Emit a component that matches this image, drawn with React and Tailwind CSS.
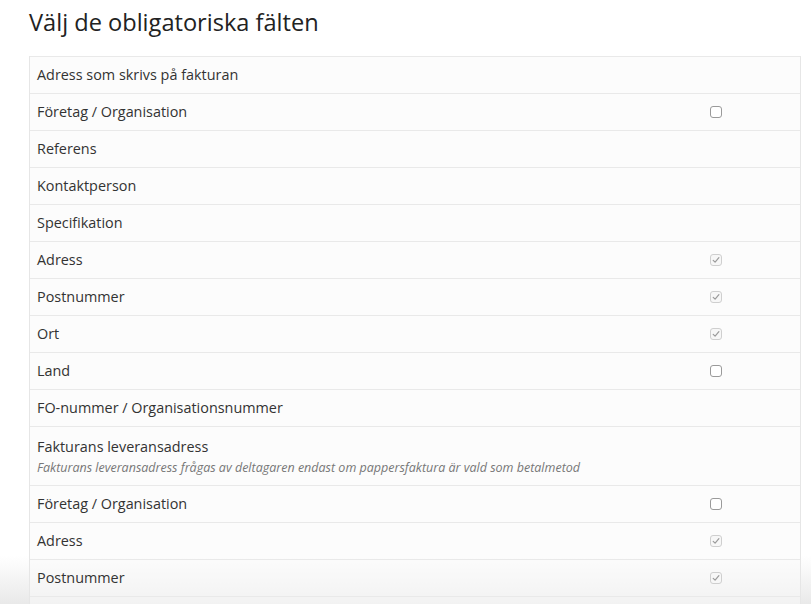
import React from "react";

const rows = [
  { label: "Adress som skrivs på fakturan" },
  { label: "Företag / Organisation", box: "off" },
  { label: "Referens" },
  { label: "Kontaktperson" },
  { label: "Specifikation" },
  { label: "Adress", box: "on" },
  { label: "Postnummer", box: "on" },
  { label: "Ort", box: "on" },
  { label: "Land", box: "off" },
  { label: "FO-nummer / Organisationsnummer" },
  {
    label: "Fakturans leveransadress",
    desc: "Fakturans leveransadress frågas av deltagaren endast om pappersfaktura är vald som betalmetod",
  },
  { label: "Företag / Organisation", box: "off" },
  { label: "Adress", box: "on" },
  { label: "Postnummer", box: "on" },
  { label: "" },
];

function Box({ state }) {
  if (state === "off") {
    return (
      <span className="block w-[12px] h-[12px] rounded-[3px] border border-[#9a9a9a] bg-white" />
    );
  }
  return (
    <span className="flex items-center justify-center w-[12px] h-[12px] rounded-[3px] border border-[#cfcfcf] bg-[#f7f7f7]">
      <svg width="8" height="8" viewBox="0 0 8 8" fill="none">
        <path d="M1.2 4.3 L3.1 6.2 L6.9 1.6" stroke="#9b9b9b" strokeWidth="1.2" strokeLinecap="round" strokeLinejoin="round" />
      </svg>
    </span>
  );
}

export default function App() {
  return (
    <div className="relative w-[811px] h-[604px] overflow-hidden bg-white" style={{ fontFamily: '"Open Sans", "Noto Sans", sans-serif' }}>
      <div className="absolute left-0 right-0 bottom-0 h-[48px] bg-gradient-to-b from-[rgba(236,236,236,0)] to-[#e9e9e9]" />
      <div className="relative">
        <h1 className="ml-[29px] pt-[6px] h-[56px] text-[23.6px] leading-[32px] text-[#222] font-normal">
          Välj de obligatoriska fälten
        </h1>
        <div className="ml-[29px] w-[772px] border-l border-r border-b border-[#e6e6e6] bg-[rgba(250,250,250,0.55)]">
          {rows.map((r, i) => (
            <div
              key={i}
              className={`flex border-t border-[#e9e9e9] ${r.desc ? "h-[59px]" : "h-[37px]"}`}
            >
              <div className="flex-1 pl-[7px] flex flex-col justify-center">
                {r.label && <div className="text-[14.4px] leading-[18px] text-[#333]">{r.label}</div>}
                {r.desc && (
                  <div className="mt-[4px] text-[12.5px] leading-[15px] italic text-[#777]">
                    {r.desc}
                  </div>
                )}
              </div>
              <div className="w-[169px] flex items-center justify-center">
                {r.box && <Box state={r.box} />}
              </div>
            </div>
          ))}
        </div>
      </div>
    </div>
  );
}
